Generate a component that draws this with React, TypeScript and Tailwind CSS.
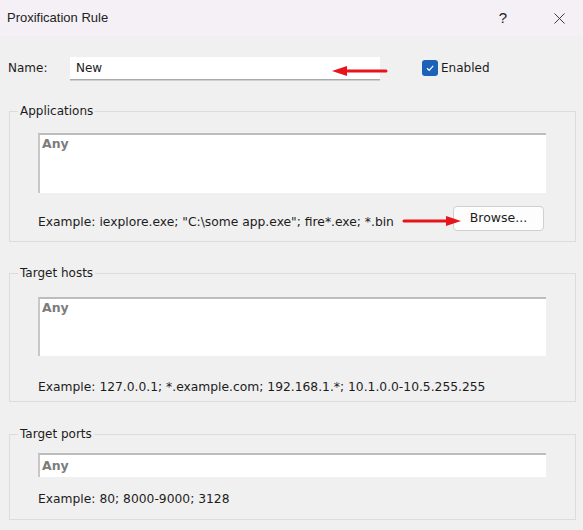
import { X } from "lucide-react";

function Arrow({ className }: { className: string }) {
  // red annotation arrow, tip on the left
  return (
    <svg className={className} width="56" height="12" viewBox="0 0 56 12" fill="none">
      <line x1="12" y1="6" x2="54" y2="6" stroke="#e8141b" strokeWidth="3" strokeLinecap="round" />
      <path d="M0 6 L15 1 L15 11 Z" fill="#e8141b" />
    </svg>
  );
}

function Group({ title, className, children }: { title: string; className: string; children: React.ReactNode }) {
  return (
    <fieldset className={`mx-[9px] w-[567px] border border-[#dcdcdc] ${className}`}>
      <legend className="ml-[8px] px-[2px] leading-[16px]">{title}</legend>
      {children}
    </fieldset>
  );
}

function Sunken({ className, children }: { className: string; children?: React.ReactNode }) {
  return (
    <div
      className={`w-[508px] bg-white border-t-2 border-l-2 border-t-[#bdbdbd] border-l-[#c8c8c8] pl-[2px] text-[12.5px] font-bold text-[#7c7c7c] ${className}`}
    >
      {children}
    </div>
  );
}

export default function App() {
  return (
    <div className="relative w-[583px] h-[530px] overflow-hidden bg-[#f0f0f0] text-[12px] text-[#1c1c1c] font-['DejaVu_Sans',Verdana,sans-serif]">
      <div className="flex h-[36px] items-center bg-[#f4f0f5] pl-[7px] font-['Liberation_Sans',Arial,sans-serif]">
        <span className="text-[13px] text-[#222]">Proxification Rule</span>
        <span className="ml-auto mr-[43px] text-[15px] text-[#222]">?</span>
        <X className="mr-[14px] h-[19px] w-[19px] text-[#333]" strokeWidth={1.2} />
      </div>

      <div className="mt-[21px] flex h-[22px] items-center">
        <span className="ml-[8px] w-[62px]">Name:</span>
        <div className="flex h-[23px] w-[310px] items-center border-b border-[#a9a9a9] bg-white pl-[6px] shadow-[0_1px_0_#d0d0d0]">
          New
        </div>
        <div className="ml-[42px] flex h-[16px] w-[16px] items-center justify-center rounded-[3px] bg-[#1b62b8]">
          <svg width="10" height="10" viewBox="0 0 10 10" fill="none">
            <path d="M2 5.2 L4.2 7.3 L8.2 2.8" stroke="white" strokeWidth="1.2" />
          </svg>
        </div>
        <span className="ml-[3px]">Enabled</span>
      </div>

      <Group title="Applications" className="mt-[24px] pb-[10px]">
        <div className="pl-[28px]">
          <Sunken className="mt-[14px] h-[60px]">Any</Sunken>
          <div className="mt-[13px] flex h-[25px] w-[508px] items-end">
            <span className="mb-[1px] text-[12.3px] leading-[16px]">Example: iexplore.exe; "C:\some app.exe"; fire*.exe; *.bin</span>
            <button className="ml-auto mr-[2px] h-[25px] w-[91px] rounded-[4px] border border-[#d0d0d0] bg-[#fdfdfd] text-[12.5px]">
              Browse...
            </button>
          </div>
        </div>
      </Group>

      <Group title="Target hosts" className="mt-[23px] pb-[6px]">
        <div className="pl-[28px]">
          <Sunken className="mt-[16px] h-[59px]">Any</Sunken>
          <div className="mt-[23px] text-[12.3px] leading-[16px]">Example: 127.0.0.1; *.example.com; 192.168.1.*; 10.1.0.0-10.5.255.255</div>
        </div>
      </Group>

      <Group title="Target ports" className="mt-[24px] pb-[12px]">
        <div className="pl-[28px]">
          <Sunken className="mt-[11px] flex h-[24px] items-center">Any</Sunken>
          <div className="mt-[14px] text-[12.3px] leading-[16px]">Example: 80; 8000-9000; 3128</div>
        </div>
      </Group>

      <Arrow className="absolute left-[332px] top-[65px]" />
      <svg className="absolute left-[402px] top-[215px]" width="60" height="12" viewBox="0 0 60 12" fill="none">
        <line x1="2" y1="6" x2="46" y2="6" stroke="#e8141b" strokeWidth="3" strokeLinecap="round" />
        <path d="M59 6 L44 1 L44 11 Z" fill="#e8141b" />
      </svg>
    </div>
  );
}
